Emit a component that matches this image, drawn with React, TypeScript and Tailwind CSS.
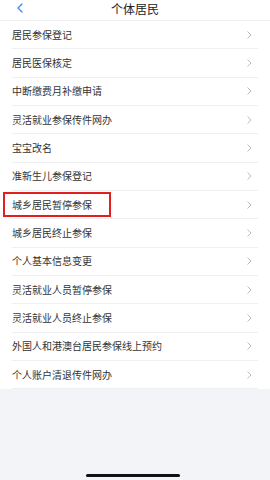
import React from "react";

const items = [
  "居民参保登记",
  "居民医保核定",
  "中断缴费月补缴申请",
  "灵活就业参保传件网办",
  "宝宝改名",
  "准新生儿参保登记",
  "城乡居民暂停参保",
  "城乡居民终止参保",
  "个人基本信息变更",
  "灵活就业人员暂停参保",
  "灵活就业人员终止参保",
  "外国人和港澳台居民参保线上预约",
  "个人账户清退传件网办",
];

function Chevron({ className }: { className?: string }) {
  return (
    <svg width="5" height="8" viewBox="0 0 5 8" className={className} fill="none">
      <path d="M0.8 0.8 L4 4 L0.8 7.2" stroke="#b5b5b8" strokeWidth="0.9" strokeLinecap="round" strokeLinejoin="round" />
    </svg>
  );
}

export default function App() {
  return (
    <div
      className="w-[270px] h-[480px] bg-[#f3f4f7] flex flex-col relative overflow-hidden"
      style={{ fontFamily: '"Noto Sans CJK SC", "Noto Sans", sans-serif' }}
    >
      <div className="h-[21px] bg-white flex items-center justify-center relative border-b border-[#f1f1f3]">
        <svg width="8" height="10" viewBox="0 0 8 10" className="absolute left-[16px] top-[3px]" fill="none">
          <path d="M6 1 L2 5 L6 9" stroke="#4a8af0" strokeWidth="1.4" strokeLinecap="round" strokeLinejoin="round" />
        </svg>
        <span className="text-[12px] leading-none text-[#222] -mt-[3px]">个体居民</span>
      </div>
      <div className="bg-white">
        {items.map((t, i) => (
          <div key={i} className="h-[28.33px] px-[12px]">
            <div className="h-full flex items-center justify-between border-b border-[#efeff1] relative">
              {i === 6 && (
                <div className="absolute left-[-9px] top-[1.5px] w-[108px] h-[25px] border-2 border-[#e21f1f]" />
              )}
              <span className="text-[10px] leading-none text-[#333]">{t}</span>
              <Chevron className="mr-[6px]" />
            </div>
          </div>
        ))}
      </div>
      <div className="flex-1" />
      <div className="absolute left-[86px] top-[474px] w-[94px] h-[3px] rounded-full bg-[#111]" />
    </div>
  );
}
